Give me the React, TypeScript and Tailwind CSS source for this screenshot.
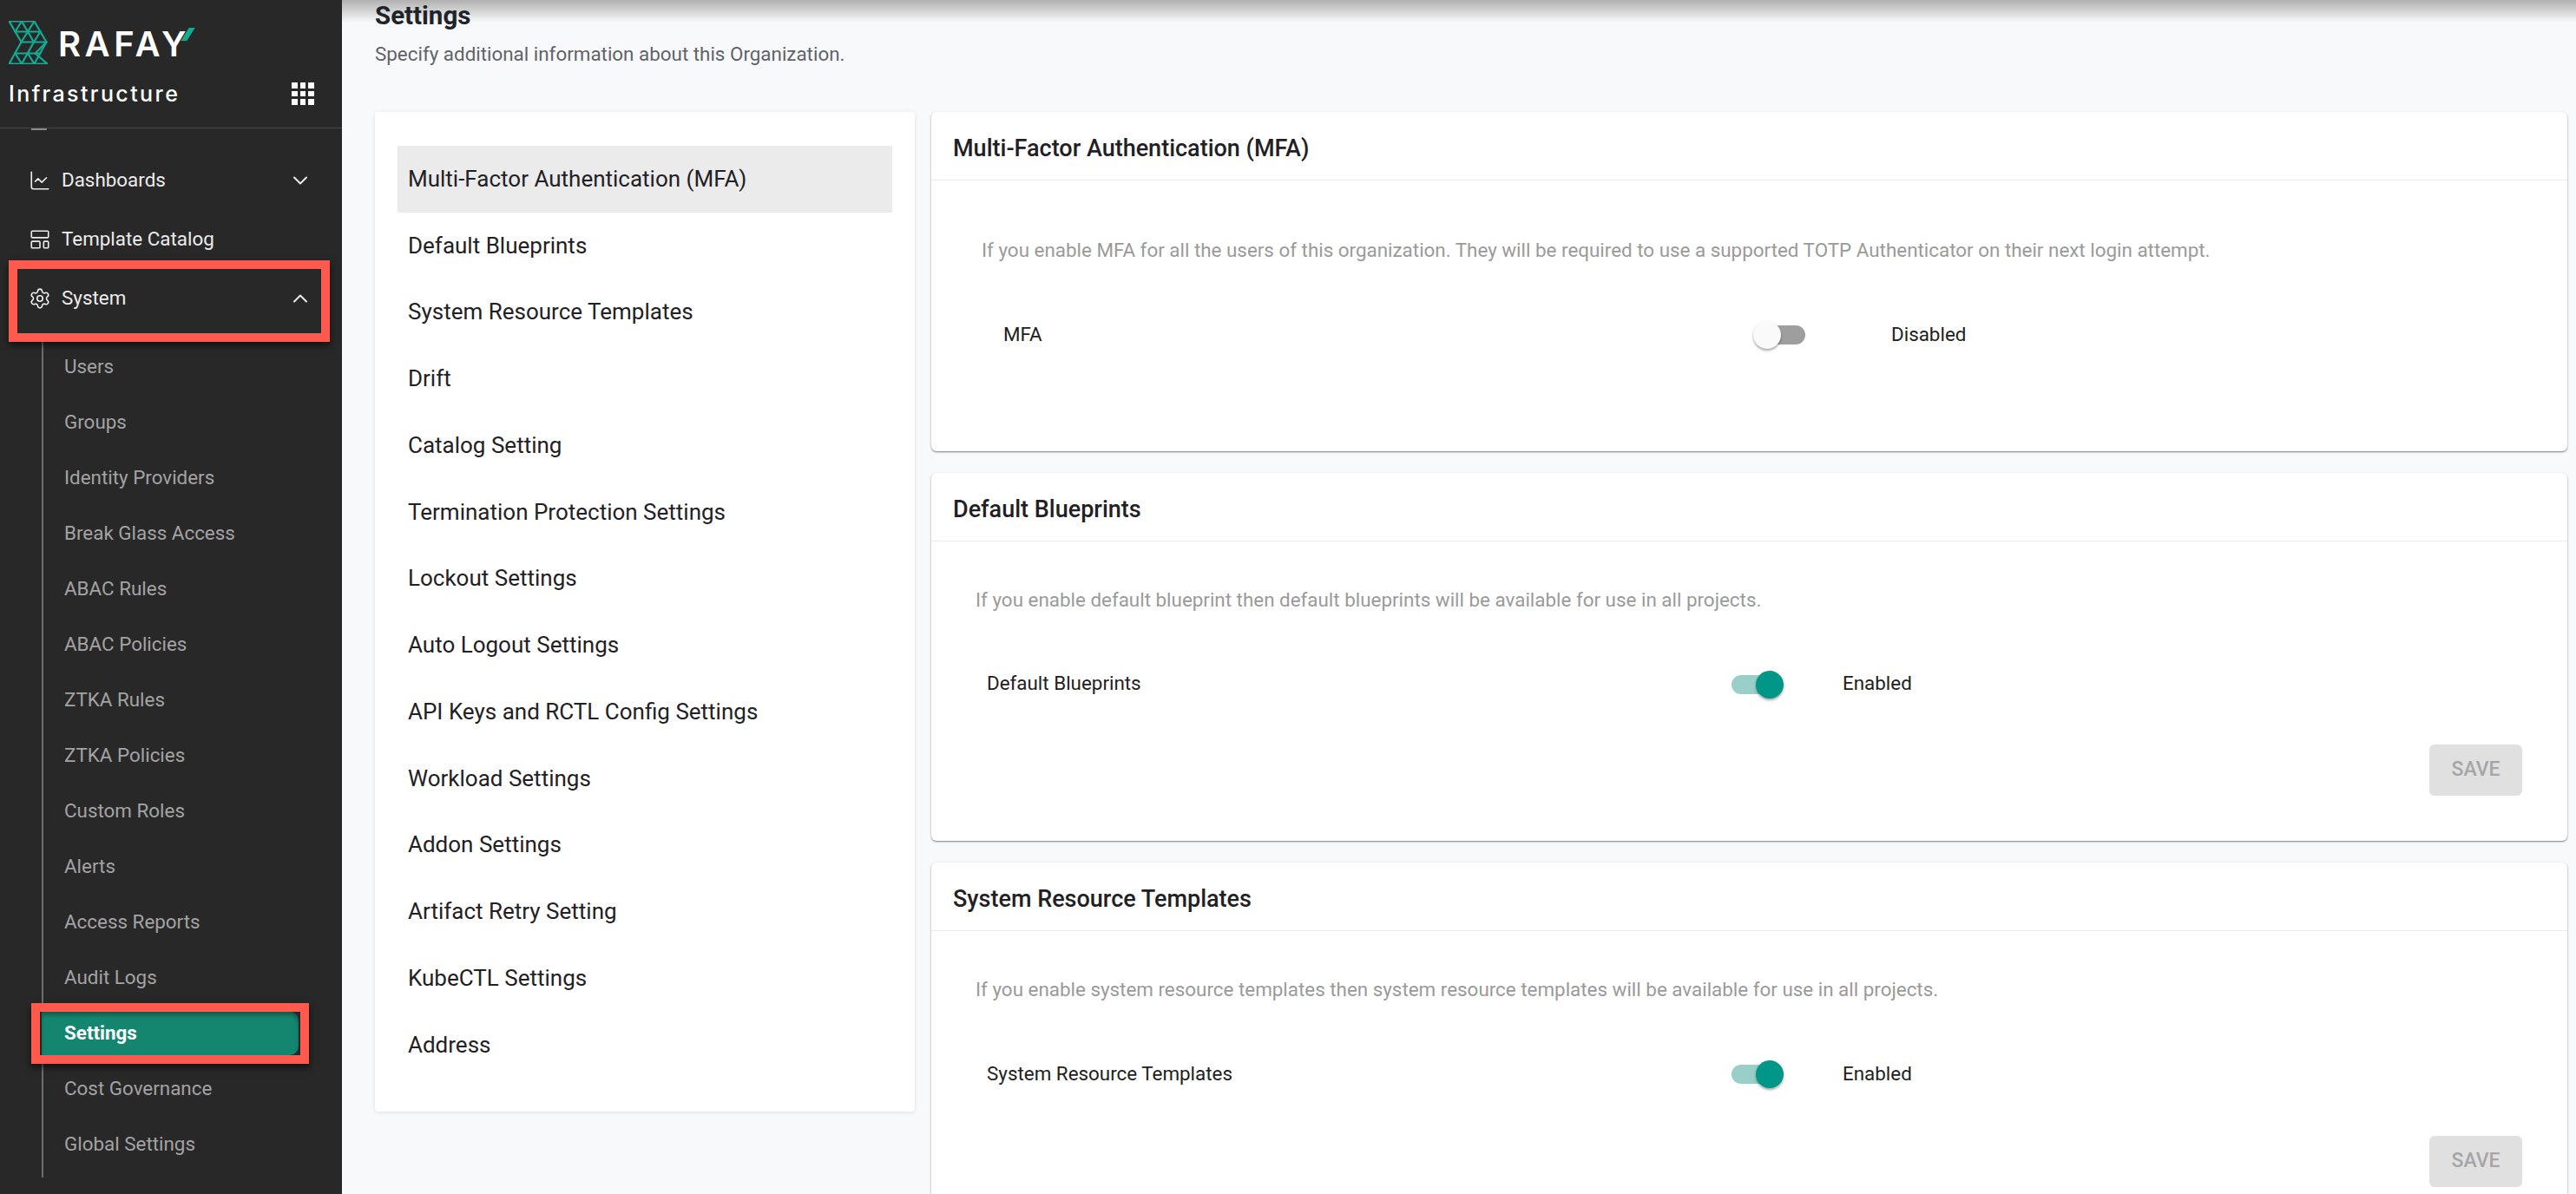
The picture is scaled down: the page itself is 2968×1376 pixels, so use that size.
import React from 'react';
import { ChartLine, ChevronDown, ChevronUp, LayoutTemplate, Settings } from 'lucide-react';

const subItems = [
  'Users',
  'Groups',
  'Identity Providers',
  'Break Glass Access',
  'ABAC Rules',
  'ABAC Policies',
  'ZTKA Rules',
  'ZTKA Policies',
  'Custom Roles',
  'Alerts',
  'Access Reports',
  'Audit Logs',
  'Settings',
  'Cost Governance',
  'Global Settings',
];

const settingsMenu = [
  'Multi-Factor Authentication (MFA)',
  'Default Blueprints',
  'System Resource Templates',
  'Drift',
  'Catalog Setting',
  'Termination Protection Settings',
  'Lockout Settings',
  'Auto Logout Settings',
  'API Keys and RCTL Config Settings',
  'Workload Settings',
  'Addon Settings',
  'Artifact Retry Setting',
  'KubeCTL Settings',
  'Address',
];

const Logo = () => (
  <svg width="45" height="50" viewBox="-0.5 -0.5 45 50" fill="none" stroke="#12ab94" strokeWidth="2.2" strokeLinejoin="round" strokeLinecap="round">
    <path d="M0 0H29L43 24L30 37L44 49H22L14.5 49H0L14 24Z" />
    <path d="M7 12H36M14 24H43M7 37H36" />
    <path d="M14.5 0L28.5 24M14.5 0L7 12M29 0L14 24M36 12L28.5 24M28.5 24L14.5 49M7 37L14.5 49M21.5 37L29 49M43 24L29 49" />
  </svg>
);

const Toggle = ({ on }: { on: boolean }) => (
  <div className="relative h-[22px] w-[60px]">
    <div className={`absolute top-0 h-[22px] w-[52px] rounded-full ${on ? 'left-0 bg-[#99cfc8]' : 'left-[8px] bg-[#9e9e9e]'}`} />
    <div
      className={`absolute top-[-5px] h-8 w-8 rounded-full shadow-[0_2px_3px_rgba(0,0,0,0.35)] ${on ? 'right-0 bg-[#009688]' : 'left-0 bg-[#fafafa]'}`}
    />
  </div>
);

const SaveButton = () => (
  <div className="flex h-[59px] w-[107px] items-center justify-center rounded-[6px] bg-[#e0e0e0] text-[23px] font-medium text-[#a6a6a6]">
    SAVE
  </div>
);

const CardHeader = ({ title }: { title: string }) => (
  <div className="flex h-[79px] items-center border-b border-[#ececec] pl-[25px] pt-[7px] text-[27px] font-medium text-[#1f2126]">{title}</div>
);

export default function App() {
  return (
    <div className="flex h-[1376px] w-[2968px] overflow-hidden bg-[#f8f9fa] font-['Roboto',sans-serif]">
      {/* Sidebar */}
      <aside className="flex h-full w-[394px] shrink-0 flex-col bg-[#282828]">
        <div className="h-[148px] shrink-0 border-b border-[#474747] pl-[10px] pr-[32px] pt-[24px]">
          <div className="flex items-start">
            <Logo />
            <div className="relative ml-[12px] mt-[6px] font-['Inter',sans-serif] text-[40px] font-semibold leading-[42px] tracking-[4.5px] text-white">
              RAFAY
              <span className="absolute right-[-1px] top-[2px] h-[15px] w-[7px] skew-x-[-32deg] bg-[#12ab94]" />
            </div>
          </div>
          <div className="mt-[19px] flex items-center justify-between">
            <span className="font-['Inter',sans-serif] text-[25px] font-medium leading-[30px] tracking-[2.4px] text-white">Infrastructure</span>
            <div className="grid w-[26px] grid-cols-3 gap-[3px]">
              {Array.from({ length: 9 }).map((_, i) => (
                <span key={i} className="h-[6.6px] bg-white" />
              ))}
            </div>
          </div>
        </div>

        <div className="relative flex-1 pt-[26px] text-[22.4px]">
          {/* scrolled-off item above Dashboards */}
          <span className="absolute left-[36px] top-0 h-[2px] w-[18px] bg-[#8a8a8a]" />

          <div className="flex h-[68px] items-center pl-[33px] pr-[34px] text-[#ececec]">
            <ChartLine size={26} strokeWidth={1.5} />
            <span className="ml-[12px] flex-1">Dashboards</span>
            <ChevronDown size={28} strokeWidth={1.7} />
          </div>
          <div className="flex h-[68px] items-center pl-[33px] pr-[34px] text-[#ececec]">
            <LayoutTemplate size={26} strokeWidth={1.5} />
            <span className="ml-[12px] flex-1">Template Catalog</span>
          </div>

          <div className="relative flex h-[68px] items-center pl-[33px] pr-[34px] text-[#ececec]">
            <Settings size={26} strokeWidth={1.5} />
            <span className="ml-[12px] flex-1">System</span>
            <ChevronUp size={28} strokeWidth={1.7} />
            <div className="absolute left-[10px] top-[-10px] h-[94px] w-[370px] border-[10px] border-[#ff5a4d] shadow-[0_4px_8px_rgba(0,0,0,0.6)]" />
          </div>

          <div className="ml-[48px] mt-[13px] w-[294px] border-l-2 border-[#6e6e6e] pb-[6px]">
            {subItems.map((item) =>
              item === 'Settings' ? (
                <div key={item} className="relative flex h-[64px] items-center">
                  <div className="absolute inset-x-[-2px] top-[7px] h-[50px] rounded-r-[10px] bg-[#14866f] shadow-[inset_0_4px_4px_rgba(0,0,0,0.3)]" />
                  <span className="relative pl-[24px] font-bold text-white">{item}</span>
                  <div className="absolute left-[-14px] top-[-3px] h-[70px] w-[320px] border-[10px] border-[#ff5a4d] shadow-[0_4px_8px_rgba(0,0,0,0.6)]" />
                </div>
              ) : (
                <div key={item} className="flex h-[64px] items-center pl-[24px] text-[#a3a3a3]">
                  {item}
                </div>
              ),
            )}
          </div>
        </div>
      </aside>

      {/* Main */}
      <main className="relative h-full flex-1 overflow-hidden pl-[38px] pr-[10px]">
        <div className="absolute inset-x-0 top-0 h-[26px] bg-gradient-to-b from-[#b0b0b0] to-transparent" />
        <h1 className="relative pt-[2px] text-[29.5px] font-bold leading-[32px] text-[#20232a]">Settings</h1>
        <p className="mt-[15px] text-[22.4px] leading-[26px] text-[#5f6369]">Specify additional information about this Organization.</p>

        <div className="mt-[54px] flex items-start gap-[19px]">
          {/* Settings menu */}
          <nav className="w-[622px] shrink-0 rounded-[4px] bg-white px-[26px] pb-[38px] pt-[39px] shadow-[0_1px_5px_rgba(0,0,0,0.1)]">
            {settingsMenu.map((item, i) => (
              <div
                key={item}
                className={`flex h-[76.75px] items-center pl-[12px] text-[26px] text-[#1f2126] ${i === 0 ? 'bg-[#ebebeb]' : ''}`}
              >
                {item}
              </div>
            ))}
          </nav>

          <div className="flex min-w-0 flex-1 flex-col gap-[25px] text-[22.4px]">
            {/* MFA */}
            <section className="h-[391px] rounded-[6px] bg-white shadow-[0_1px_2px_rgba(0,0,0,0.5)]">
              <CardHeader title="Multi-Factor Authentication (MFA)" />
              <p className="pl-[58px] pt-[67px] leading-[26px] text-[#9a9a9a]">
                If you enable MFA for all the users of this organization. They will be required to use a supported TOTP Authenticator on their next login attempt.
              </p>
              <div className="mt-[72px] flex h-[26px] items-center text-[#212121]">
                <span className="ml-[83px] w-[864px]">MFA</span>
                <Toggle on={false} />
                <span className="ml-[99px]">Disabled</span>
              </div>
            </section>

            {/* Default Blueprints */}
            <section className="h-[424px] rounded-[6px] bg-white shadow-[0_1px_2px_rgba(0,0,0,0.5)]">
              <CardHeader title="Default Blueprints" />
              <p className="pl-[51px] pt-[54px] leading-[26px] text-[#9a9a9a]">
                If you enable default blueprint then default blueprints will be available for use in all projects.
              </p>
              <div className="mt-[71px] flex h-[26px] items-center text-[#212121]">
                <span className="ml-[64px] w-[858px]">Default Blueprints</span>
                <div className="pt-[2px]">
                  <Toggle on />
                </div>
                <span className="ml-[68px]">Enabled</span>
              </div>
              <div className="mt-[57px] flex justify-end pr-[52px]">
                <SaveButton />
              </div>
            </section>

            {/* System Resource Templates */}
            <section className="h-[425px] rounded-[6px] bg-white shadow-[0_1px_2px_rgba(0,0,0,0.5)]">
              <CardHeader title="System Resource Templates" />
              <p className="pl-[51px] pt-[54px] leading-[26px] text-[#9a9a9a]">
                If you enable system resource templates then system resource templates will be available for use in all projects.
              </p>
              <div className="mt-[72px] flex h-[26px] items-center text-[#212121]">
                <span className="ml-[64px] w-[858px]">System Resource Templates</span>
                <Toggle on />
                <span className="ml-[68px]">Enabled</span>
              </div>
              <div className="mt-[58px] flex justify-end pr-[52px]">
                <SaveButton />
              </div>
            </section>
          </div>
        </div>
      </main>
    </div>
  );
}
